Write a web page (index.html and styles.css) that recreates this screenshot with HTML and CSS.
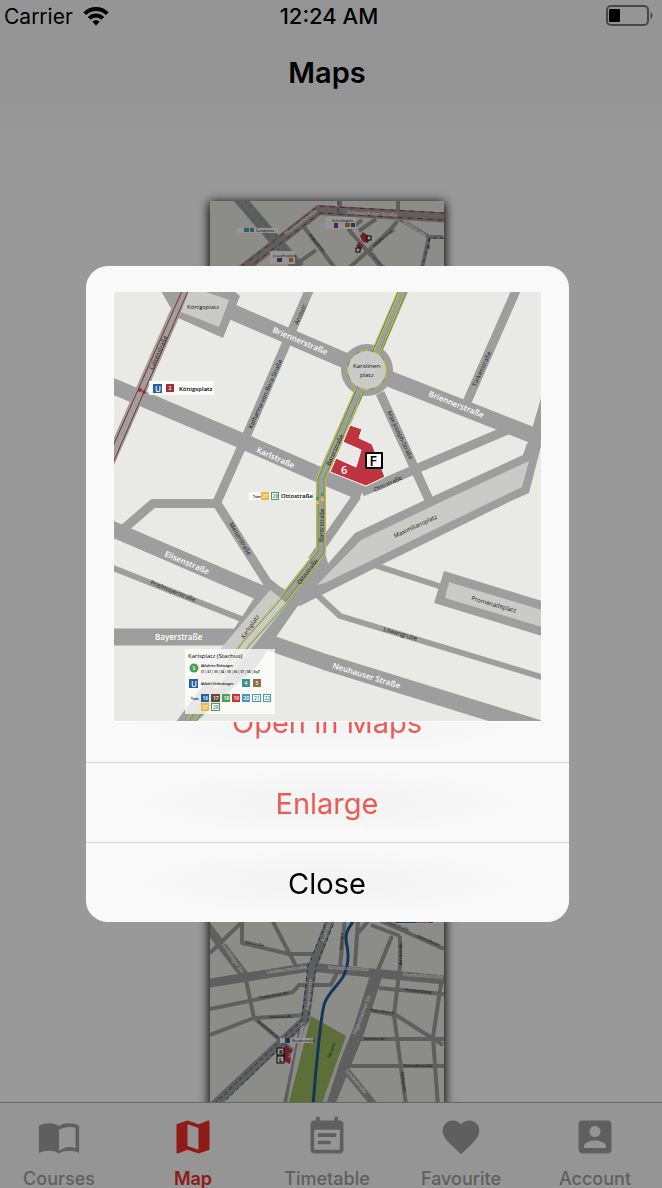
FILE: index.html
```html
<!DOCTYPE html>
<html lang="en">
<head>
<meta charset="utf-8">
<meta name="viewport" content="width=device-width, initial-scale=1">
<title>Maps</title>
<link rel="stylesheet" href="styles.css">
</head>
<body>
<div class="app">
  <header class="header">
    <div class="status">
      <div class="carrier">Carrier
        <svg class="wifi" viewBox="0 0 26 20" aria-hidden="true"><path d="M13 19.500l-3.600-3.700a5.200 5.200 0 0 1 7.200 0z"/><path class="arc" d="M6.200 12.400a9.700 9.700 0 0 1 13.600 0M1.700 7.700a16 16 0 0 1 22.600 0"/></svg>
      </div>
      <time class="clock">12:24 AM</time>
      <svg class="battery" viewBox="0 0 48 22" aria-hidden="true"><rect class="shell" x="1" y="1" width="41" height="19" rx="4"/><rect x="3" y="4" width="11" height="13" rx="1"/><path class="nub" d="M44.500 7v7q2-1 2-3.500t-2-3.500z"/></svg>
    </div>
    <h1 class="title">Maps</h1>
  </header>

  <main class="gallery">
    <svg class="card" viewBox="211 201 234 400" role="img" aria-label="Campus map north">
      <rect class="ground" x="211" y="201" width="234" height="400"/>
      <g class="road">
        <path stroke-width="12" d="M235 192L300 268"/>
        <path stroke-width="10" d="M235 276L320 210L455 218"/>
        <path stroke-width="4" d="M305 227L336 268M341 201v10M399 201v12M292 268L317 250M363 220L350 230L383 268M377 219L360 231M398 221Q396 227 350 268M399 218L430 237h14M430 237L423 268"/>
      </g>
      <path class="bus" d="M242 267L319 206L445 213M248 269L321 213L445 220"/>
      <path class="tram" d="M242 267L319 206L445 213M248 269L321 213L445 220"/>
      <path class="dash-blue" d="M245 199L303 268M237 199L296 268"/>
      <path class="dash-navy" d="M339 201v12M445 238h-14l-8 30M430 238v14"/>
      <path class="building" d="M361 236l3-4 7 5-2 6-5-1zM357 246l3-4 4 4-2 4z"/>
      <g class="tag"><rect x="238" y="228" width="41" height="5"/><rect x="327" y="217" width="30" height="12"/><rect x="271" y="251" width="25" height="13"/></g>
      <path class="chip-blue" d="M245 228h5v4h-5zM251 228h4v4h-4z"/>
      <path class="chip-violet" d="M335 223h4v5h-4zM278 258h5v4h-5z"/>
      <path class="chip-orange" d="M346 223h5v4h-5zM290 258h4v4h-4z"/>
      <path class="chip-navy" d="M352 223h4v4h-4z"/>
      <g class="pin"><rect x="368" y="236" width="4" height="4"/><rect x="357" y="248" width="4" height="4"/></g>
      <g class="street-light small"><text transform="translate(348 214) rotate(3)">Schwanthaler Straße</text><text transform="translate(287 236) rotate(-38)">Theresienstraße</text><text transform="translate(403 222) rotate(34)">Nordstraße</text></g>
      <g class="street small"><text x="257" y="232">Sandplatz</text><text x="333" y="222">Schellingstr.</text><text x="274" y="257">Josephsplatz</text><text transform="translate(310 235) rotate(51)">Augustenstr.</text><text transform="translate(375 247) rotate(-38)">Amalienstraße</text><text transform="translate(370 251) rotate(51)">Türkenstraße</text></g>
    </svg>

    <svg class="card" viewBox="211 601 234 520" role="img" aria-label="Campus map south">
      <rect class="ground" x="211" y="601" width="234" height="520"/>
      <g class="road">
        <path stroke-width="9" d="M205 984L311 967L455 981M205 922L245 975M333 915L313 969L306 1020L215 1105"/>
        <path stroke-width="12" d="M378 973L360 1030L329 1106"/>
        <path stroke-width="4" d="M211 953L247 918M243 918v25l47 11h25M273 920L297 966M346 918l-5 49-9 18h-32l-6 7-83 17M247 980l8 38 52-3M255 1018l-44 17M255 1018L294 1051M359 920l-3 46M373 917l-15 17-2 31M393 936l-14 34M401 936v30l-6 49 12 90M372 925l29 11M380 988l65 6M368 1010l29 5 47 30M442 984l-8 53 5 70M357 1039h88M346 1066h99M380 920l65 29"/>
        <path stroke-width="7" d="M346 1069L377 1107"/>
        <path stroke-width="5" d="M304 1022L286 1106"/>
      </g>
      <path class="road-edge" d="M304 1023L289 1106M347 1038L325 1106"/>
      <path class="park" d="M312 1016l35 20-25 70h-33z"/>
      <path class="river" d="M356 919c-10 13-10 17-8 27s1 20-3 29-17 18-20 30-8 60-11 101"/>
      <path class="dash-navy" d="M329 918L309 966L303 1020L211 1108M337 918L317 966L309 1020L221 1106"/>
      <path class="building" d="M286 1044l7 6-2 14-8-4z"/>
      <g class="tag"><rect x="281" y="1038" width="33" height="5"/><rect x="394" y="918" width="42" height="6"/></g>
      <path class="chip-navy" d="M286 1038h5v5h-5zM396 919h22v4h-22z"/><path class="chip-orange" d="M419 919h9v4h-9z"/><path class="chip-violet" d="M429 919h5v4h-5z"/>
      <g class="pin"><rect x="278" y="1048" width="7" height="7"/><rect x="278" y="1056" width="7" height="7"/></g>
      <g class="street small pin-text"><text x="280" y="1054">K</text><text x="280" y="1062">L</text></g>
      <text class="street-light small" transform="translate(293 1059) rotate(-80)">20</text>
      <g class="street-light small"><text transform="translate(268 974) rotate(-8)">Lindwurmstraße</text><text transform="translate(329 969) rotate(3)">Baldeplatzstraße</text><text transform="translate(404 976) rotate(4)">Humboldtstraße</text><text transform="translate(222 944) rotate(55)">Tumblinger Str.</text><text transform="translate(357 1035) rotate(-69)">Pilgersheimer Str.</text><text transform="translate(310 1010) rotate(-84)">Kapuzinerstr.</text><text transform="translate(346 1071) rotate(50)">Schönstraße</text><text transform="translate(325 942) rotate(-70)">Auenstraße</text></g>
      <g class="street small"><text transform="translate(246 943) rotate(11)">Maistraße</text><text transform="translate(260 999) rotate(-9)">Thalkirchner Str.</text><text x="270" y="1018">Isartalstraße</text><text x="293" y="1042">Brudermühl</text><text x="365" y="1040">Sommerstr.</text><text x="405" y="1067">Konradinstraße</text><text transform="translate(406 991) rotate(6)">Humboldtweg</text><text transform="translate(371 1011) rotate(8)">Hans-Mielich</text><text transform="translate(403 965) rotate(-90)">Arndtstraße</text><text transform="translate(343 950) rotate(-86)">Ehrengut</text><text transform="translate(258 1022) rotate(39)">Dreimühlenstr.</text><text transform="translate(402 1072) rotate(83)">Sachsenstr.</text><text transform="translate(379 919) rotate(22)">Fraunhoferstraße</text><text transform="translate(418 937) rotate(23)">Ohlmüllerstr.</text><text transform="translate(331 1058) rotate(-69)">Flaucher</text></g>
    </svg>
  </main>

  <nav class="tabs" aria-label="Sections">
    <a class="tab" href="#courses"><svg class="icon" viewBox="0 0 24 24" aria-hidden="true"><path fill-rule="evenodd" d="M1 6c1.450-1.100 3.550-1.500 5.500-1.500S10.550 4.900 12 6c1.450-1.100 3.550-1.500 5.500-1.500S21.550 4.900 23 6v14.700c-1.500-.7-3.500-1.200-5.500-1.200-1.950 0-4.050.4-5.500 1.500-1.450-1.100-3.550-1.500-5.500-1.500-2 0-4 .5-5.500 1.200zM21 18V7c-1.100-.35-2.300-.5-3.500-.5-1.700 0-4.150.65-5.500 1.500v11.500c1.350-.85 3.800-2 5.500-2 1.200 0 2.400.15 3.500.5z"/></svg>Courses</a>
    <a class="tab active" href="#map" aria-current="page"><svg class="icon" viewBox="0 0 24 24" aria-hidden="true"><path d="M20.500 3l-.16.03L15 5.100 9 3 3.360 4.900c-.21.07-.36.25-.36.48V20.500c0 .28.22.5.5.5l.16-.03L9 18.900l6 2.100 5.640-1.900c.21-.07.36-.25.36-.48V3.500c0-.28-.22-.5-.5-.5zM15 19l-6-2.110V5l6 2.110V19z"/></svg>Map</a>
    <a class="tab" href="#timetable"><svg class="icon" viewBox="0 0 24 24" aria-hidden="true"><path d="M17 10H7v2h10v-2zm2-7h-1V1h-2v2H8V1H6v2H5c-1.110 0-1.990.9-1.990 2L3 19c0 1.100.89 2 2 2h14c1.100 0 2-.9 2-2V5c0-1.100-.9-2-2-2zm0 16H5V8h14v11zm-5-5H7v2h7v-2z"/></svg>Timetable</a>
    <a class="tab" href="#favourite"><svg class="icon" viewBox="0 0 24 24" aria-hidden="true"><path d="M12 21.350l-1.450-1.320C5.400 15.360 2 12.280 2 8.500 2 5.420 4.420 3 7.500 3c1.740 0 3.410.81 4.500 2.090C13.090 3.810 14.760 3 16.500 3 19.580 3 22 5.420 22 8.500c0 3.780-3.400 6.860-8.550 11.540L12 21.350z"/></svg>Favourite</a>
    <a class="tab" href="#account"><svg class="icon" viewBox="0 0 24 24" aria-hidden="true"><path d="M3 5v14c0 1.100.89 2 2 2h14c1.100 0 2-.9 2-2V5c0-1.100-.9-2-2-2H5c-1.110 0-2 .9-2 2zm12 4c0 1.660-1.340 3-3 3s-3-1.340-3-3 1.340-3 3-3 3 1.340 3 3zm-9 8c0-2 4-3.100 6-3.100s6 1.100 6 3.100v1H6v-1z"/></svg>Account</a>
  </nav>
</div>

<div class="backdrop">
  <div class="dialog" role="dialog" aria-modal="true" aria-label="Karolinenplatz map">
    <svg class="map" viewBox="114 292 427 429" role="img" aria-label="Map around Karolinenplatz">
      <rect class="ground" x="114" y="292" width="427" height="429"/>
      <g class="road">
        <path stroke-width="16" d="M230 311L367 370L532 435L551 442M103 382L240 440L322 476L362 493M103 525L268 596M262 640L325 662L545 730"/>
        <path stroke-width="17" d="M113 637H240"/>
        <path stroke-width="11" d="M187 286L108 465"/>
        <path stroke-width="9" d="M311 286L246 437L217 502M518 286L467 402M380 393L431 504M357 496L312 560M120 532L153 503.500H217L267 582L292 602M362 492L512 428M548 390L532 445"/>
        <path stroke-width="6" d="M103 564L244 620M371 564L442 587M312 590L340 616L548 679"/>
        <path stroke-width="10" d="M406 284L367 374L321 479V552L283 600"/>
      </g>
      <path class="square-edge" d="M161 291H234L240 296L223 338L176 317zM266 580L290 592L325 553L330 570L297 607L276 637L258 665L196 722H176L228 652L232 632zM425 500L523 455L527 443L541 446L529 493L513 500L385 563L300 606L290 602L325 567L355 533zM444 571L542 601V636L434 603z"/>
      <path class="square" d="M189 291H203L229 300L219 327L181 312zM270 590L288 603L218 690L197 677zM529 461L522 487L495 500L325 583L317 585L361 540L445 500zM449 582L542 610V627L445 598z"/>
      <g class="line-outer"><path d="M403 289L367 374M359 391L321 479V552L283 600"/></g>
      <g class="line-inner"><path d="M403 289L367 374M359 391L321 479V552L283 600"/></g>
      <g class="line-fill"><path d="M403 289L367 374M359 391L321 479V552L283 600"/></g>
      <path class="yellow" d="M280 598L241 642L187 721M287 601L248 645L194 721"/>
      <path class="green" d="M281 599L242 643L188 722M288 602L249 646L195 722"/>
      <circle class="square-edge" cx="367" cy="370" r="26"/>
      <path class="yellow" d="M399 292L374 351M405 292L380 353M356 388L350 402M363 391L357 405"/>
      <path class="green" d="M398 292L373 351M406 292L381 353M357 388L351 402M364 391L358 405"/>
      <circle class="ring" cx="367" cy="370" r="19.500"/>
      <circle class="ring-dots" cx="367" cy="370" r="19.500"/>
      <path class="subway" d="M182 291L113 446M188 291L113 463"/>
      <g class="stop-red"><circle cx="140" cy="390" r="2"/><circle cx="144" cy="392" r="2"/></g>
      <path class="stop-green" d="M316 497h3v3h-3zM321 493h3v3h-3z"/><path class="stop-yellow" d="M316 501h3v3h-3zM321 498h3v3h-3z"/>
      <path class="building outlined" d="M350 425L362 429L359 438L372 444L385 477L366 486L330 472L336 458L356 467L361 450L343 442z"/>
      <text class="building-number" x="341" y="474">6</text>
      <rect class="marker" x="366" y="453" width="16" height="15"/><text class="marker-text" x="369.500" y="466">F</text>

      <g class="street-light">
        <text transform="translate(272 332) rotate(23)">Briennerstraße</text>
        <text transform="translate(428 396) rotate(22)">Briennerstraße</text>
        <text transform="translate(256 452) rotate(24)">Karlstraße</text>
        <text transform="translate(164 556) rotate(23)">Elisenstraße</text>
        <text x="155" y="640">Bayerstraße</text>
        <text transform="translate(332 668) rotate(17)">Neuhauser Straße</text>
      </g>
      <g class="street">
        <text x="187" y="309">Königsplatz</text>
        <text x="353" y="368">Karolinen-</text><text x="360" y="377">platz</text>
        <text transform="translate(153 370) rotate(-66)">Luisenstraße</text>
        <text transform="translate(298 325) rotate(-66)">Arcisstr.</text>
        <text transform="translate(252 429) rotate(-66)">Katharina-von-Bora-Straße</text>
        <text transform="translate(476 387) rotate(-66)">Türkenstraße</text>
        <text transform="translate(387 412) rotate(65)">Max-Joseph-Straße</text>
        <text transform="translate(330 466) rotate(-66)">Barerstraße</text>
        <text transform="translate(375 492) rotate(-25)">Ottostraße</text>
        <text transform="translate(323 542) rotate(-88)">Barerstraße</text>
        <text transform="translate(300 585) rotate(-53)">Ottostraße</text>
        <text transform="translate(229 524) rotate(59)">Meiserstraße</text>
        <text transform="translate(150 584) rotate(22)">Prielmayerstraße</text>
        <text transform="translate(395 538) rotate(-25)">Maximiliansplatz</text>
        <text transform="translate(471 600) rotate(16)">Promenadeplatz</text>
        <text transform="translate(383 631) rotate(16)">Löwengrube</text>
        <text transform="translate(244 639) rotate(-55)">Karlsplatz</text>
      </g>
      <g class="tag"><rect x="149" y="381" width="65" height="14"/><rect x="249" y="492" width="63" height="8"/></g>
      <path class="chip-navy" d="M153 384h9v9h-9z"/><path class="subway-chip" d="M166 384h8v8h-8z"/>
      <text class="chip-letter" x="155" y="392">U</text><text class="chip-text" x="168.500" y="390">2</text><text class="stop-name" x="179" y="391">Königsplatz</text>
      <text class="note" x="253" y="498">Tram</text><path class="chip-yellow" d="M261 492h8v8h-8z"/><rect class="chip-outline green-outline" x="271.500" y="492.500" width="7" height="7"/>
      <text class="chip-text" x="262.500" y="498">27</text><text class="chip-text on-white" x="272.500" y="498">28</text><text class="stop-name" x="281" y="498">Ottostraße</text>

      <rect class="legend" x="185" y="649" width="90" height="65"/>
      <text class="legend-title" x="188" y="658">Karlsplatz (Stachus)</text>
      <circle class="suburban" cx="194" cy="668" r="4.500"/><text class="chip-text" x="192.500" y="670">S</text>
      <text class="note" x="201" y="667">Abfahrten Richtungen</text><text class="note" x="201" y="673">S1 | S2 | S3 | S4 | S5 | S6 | S7 | S8 | Stp7</text>
      <path class="chip-navy" d="M189 679h9v9h-9z"/><text class="chip-letter" x="191" y="687">U</text>
      <text class="note" x="201" y="685">Abfahrt Verbindungen</text>
      <path class="chip-teal" d="M242 679h8v8h-8z"/><path class="chip-brown" d="M253 679h8v8h-8z"/>
      <text class="note" x="191" y="700">Tram</text>
      <path class="chip-navy" d="M201 694h8v8h-8z"/><path class="chip-dark" d="M211 694h9v8h-9z"/><path class="stop-green" d="M222 694h8v8h-8z"/><path class="chip-red" d="M232 694h8v8h-8z"/><path class="chip-blue" d="M242 694h8v8h-8z"/><path class="chip-yellow" d="M201 703h8v8h-8z"/>
      <g class="chip-outline"><rect x="252.500" y="694.500" width="8" height="7"/><rect x="263.500" y="694.500" width="7" height="7"/><rect class="green-outline" x="211.500" y="703.500" width="8" height="7"/></g>
      <g class="chip-text"><text x="244.500" y="685">4</text><text x="255.500" y="685">5</text><text x="202.500" y="700">16</text><text x="213" y="700">17</text><text x="223.500" y="700">18</text><text x="233.500" y="700">19</text><text x="243.500" y="700">20</text><text x="202.500" y="709">27</text></g>
      <g class="chip-text on-white"><text x="254" y="700">21</text><text x="264.500" y="700">22</text><text x="213" y="709">28</text></g>
    </svg>
    <button class="action" type="button">Open in Maps</button>
    <button class="action" type="button">Enlarge</button>
    <button class="action close" type="button">Close</button>
  </div>
</div>
</body>
</html>
```
FILE: styles.css
```css
* { box-sizing: border-box; }

body {
  margin: 0;
  overflow: hidden;
  background: #fff;
  color: #000;
  font-family: Inter, "Liberation Sans", sans-serif;
}

/* The screen runs slightly past the left and bottom window edges. */
.app {
  display: flex;
  flex-direction: column;
  height: calc(100vh + 12px);
  margin-left: -8px;
}

.header { background: #f8f8f8; }

.status {
  display: grid;
  grid-template-columns: 1fr auto 1fr;
  align-items: center;
  height: 32px;
  padding: 0 8px 0 12px;
  font-size: 21px;
}
.carrier { display: flex; align-items: center; gap: 10px; }
.wifi { width: 26px; height: 20px; }
.arc { fill: none; stroke: #000; stroke-width: 4; }
.clock { font-size: 22px; font-weight: 500; }
.battery { width: 48px; height: 22px; justify-self: end; }
.shell { fill: none; stroke: #777; stroke-width: 2; }
.nub { fill: #777; }

.title {
  margin: 0;
  padding-top: 21px;
  font-size: 29px;
  line-height: 40px;
  font-weight: 600;
  text-align: center;
}

.gallery {
  flex: 1;
  min-height: 0;
  overflow: hidden;
  display: flex;
  flex-direction: column;
  align-items: center;
  padding-top: 108px;
  background: linear-gradient(#f8f8f8 0, #fff 60px);
}
.card {
  flex: none;
  width: 234px;
  box-shadow: 0 2px 10px 1px #000;
}

.tabs {
  display: grid;
  grid-template-columns: repeat(5, 1fr);
  flex: none;
  height: 98px;
  padding-top: 12px;
  border-top: 1px solid #aaa;
  background: #f8f8f8;
}
.tab {
  display: flex;
  flex-direction: column;
  align-items: center;
  gap: 7px;
  color: #9e9e9e;
  font-size: 18px;
  line-height: 26px;
  font-weight: 500;
  text-decoration: none;
}
.tab.active { color: #ee2c28; font-weight: 600; }
.icon { width: 44px; height: 44px; fill: currentColor; }

.backdrop {
  position: fixed;
  inset: 0 0 0 -8px;
  display: grid;
  place-items: center;
  background: rgba(0, 0, 0, .4);
}
.dialog {
  display: flex;
  flex-direction: column;
  width: 74%;
  max-width: 483px;
  padding-top: 26px;
  overflow: hidden;
  border-radius: 22px;
  background: #f9f9f9;
}
.map {
  position: relative;
  align-self: center;
  width: calc(100% - 54px);
  margin-bottom: -40px;
  border: 1px solid #fff;
  border-top: 0;
}
.action {
  height: 80px;
  border: 0;
  border-top: 1px solid #d2d3d5;
  padding: 2px 0 0;
  background: radial-gradient(ellipse, #f3f3f3, #f9f9f9 60%);
  color: #ed5a54;
  font: 400 29px/40px Inter, "Liberation Sans", sans-serif;
}
.map + .action { border-top: 0; }
.action.close { color: #000; }

/* Map drawing */
.ground { fill: #e9eae5; }
.road { fill: none; stroke: #9e9e9e; stroke-linejoin: round; }
.square-edge { fill: #9e9e9e; }
.square { fill: #cacac9; }
.line-outer, .line-inner, .line-fill, .yellow, .green, .subway { fill: none; stroke-linejoin: round; }
.line-outer { stroke: #edb83e; stroke-width: 9; }
.line-inner { stroke: #4aa04f; stroke-width: 7; }
.line-fill { stroke: #9e9e9e; stroke-width: 5; }
.yellow { stroke: #edb83e; }
.green { stroke: #4aa04f; }
.ring { fill: #cacac9; stroke: #4aa04f; stroke-width: 1; }
.ring-dots { fill: none; stroke: #edb83e; stroke-width: 1; stroke-dasharray: 9 5; }
.subway { stroke: #842c30; }
.stop-red, .subway-chip { fill: #9b3033; }
.stop-green, .suburban { fill: #4aa04f; }
.stop-yellow, .chip-yellow { fill: #edb83e; }
.building { fill: #c03440; }
.outlined { stroke: #fff; stroke-width: 1; }
.building-number { fill: #fff; font: 600 11px "Open Sans", sans-serif; }
.marker { fill: #fff; stroke: #000; stroke-width: 2; }
.marker-text { font: 600 14px "Open Sans", sans-serif; }
.pin { fill: #fff; stroke: #000; }
.tag { fill: #fbfbfa; }
.legend { fill: #fff; fill-opacity: .75; }
.street { fill: #111; font: 400 6px "Open Sans", sans-serif; }
.street-light { fill: #fff; font: 600 8px "Open Sans", sans-serif; }
.street.small { font-size: 4px; }
.street-light.small { font-size: 5px; }
.street.small.pin-text { font-size: 6px; font-weight: 700; }
.stop-name { font: 600 6px "Open Sans", sans-serif; }
.legend-title { font: 400 6px "Open Sans", sans-serif; }
.note { font: 600 3px "Open Sans", sans-serif; }
.chip-letter { fill: #fff; font: 600 8px "Open Sans", sans-serif; }
.chip-text { fill: #fff; font: 600 5px "Open Sans", sans-serif; }
.chip-text.on-white { fill: #388f75; }
.chip-navy { fill: #2360a4; }
.chip-blue { fill: #4998b9; }
.chip-violet { fill: #7c3c85; }
.chip-orange { fill: #dd7b2d; }
.chip-teal { fill: #3d9388; }
.chip-brown { fill: #8b7339; }
.chip-dark { fill: #5e4a3b; }
.chip-red { fill: #c63437; }
.chip-outline { fill: #fff; stroke: #4998b9; }
.green-outline { stroke: #4aa04f; }
.bus, .tram, .dash-blue, .dash-navy, .river, .road-edge { fill: none; }
.bus { stroke: #dd7b2d; }
.tram { stroke: #6b3b80; stroke-dasharray: 5 5; }
.dash-blue { stroke: #4998b9; stroke-dasharray: 4 4; }
.dash-navy { stroke: #274c85; stroke-dasharray: 4 3; }
.river { stroke: #22599b; stroke-width: 3; }
.road-edge { stroke: #e4e4e4; stroke-width: 3; }
.park { fill: #9bb95f; }
```
